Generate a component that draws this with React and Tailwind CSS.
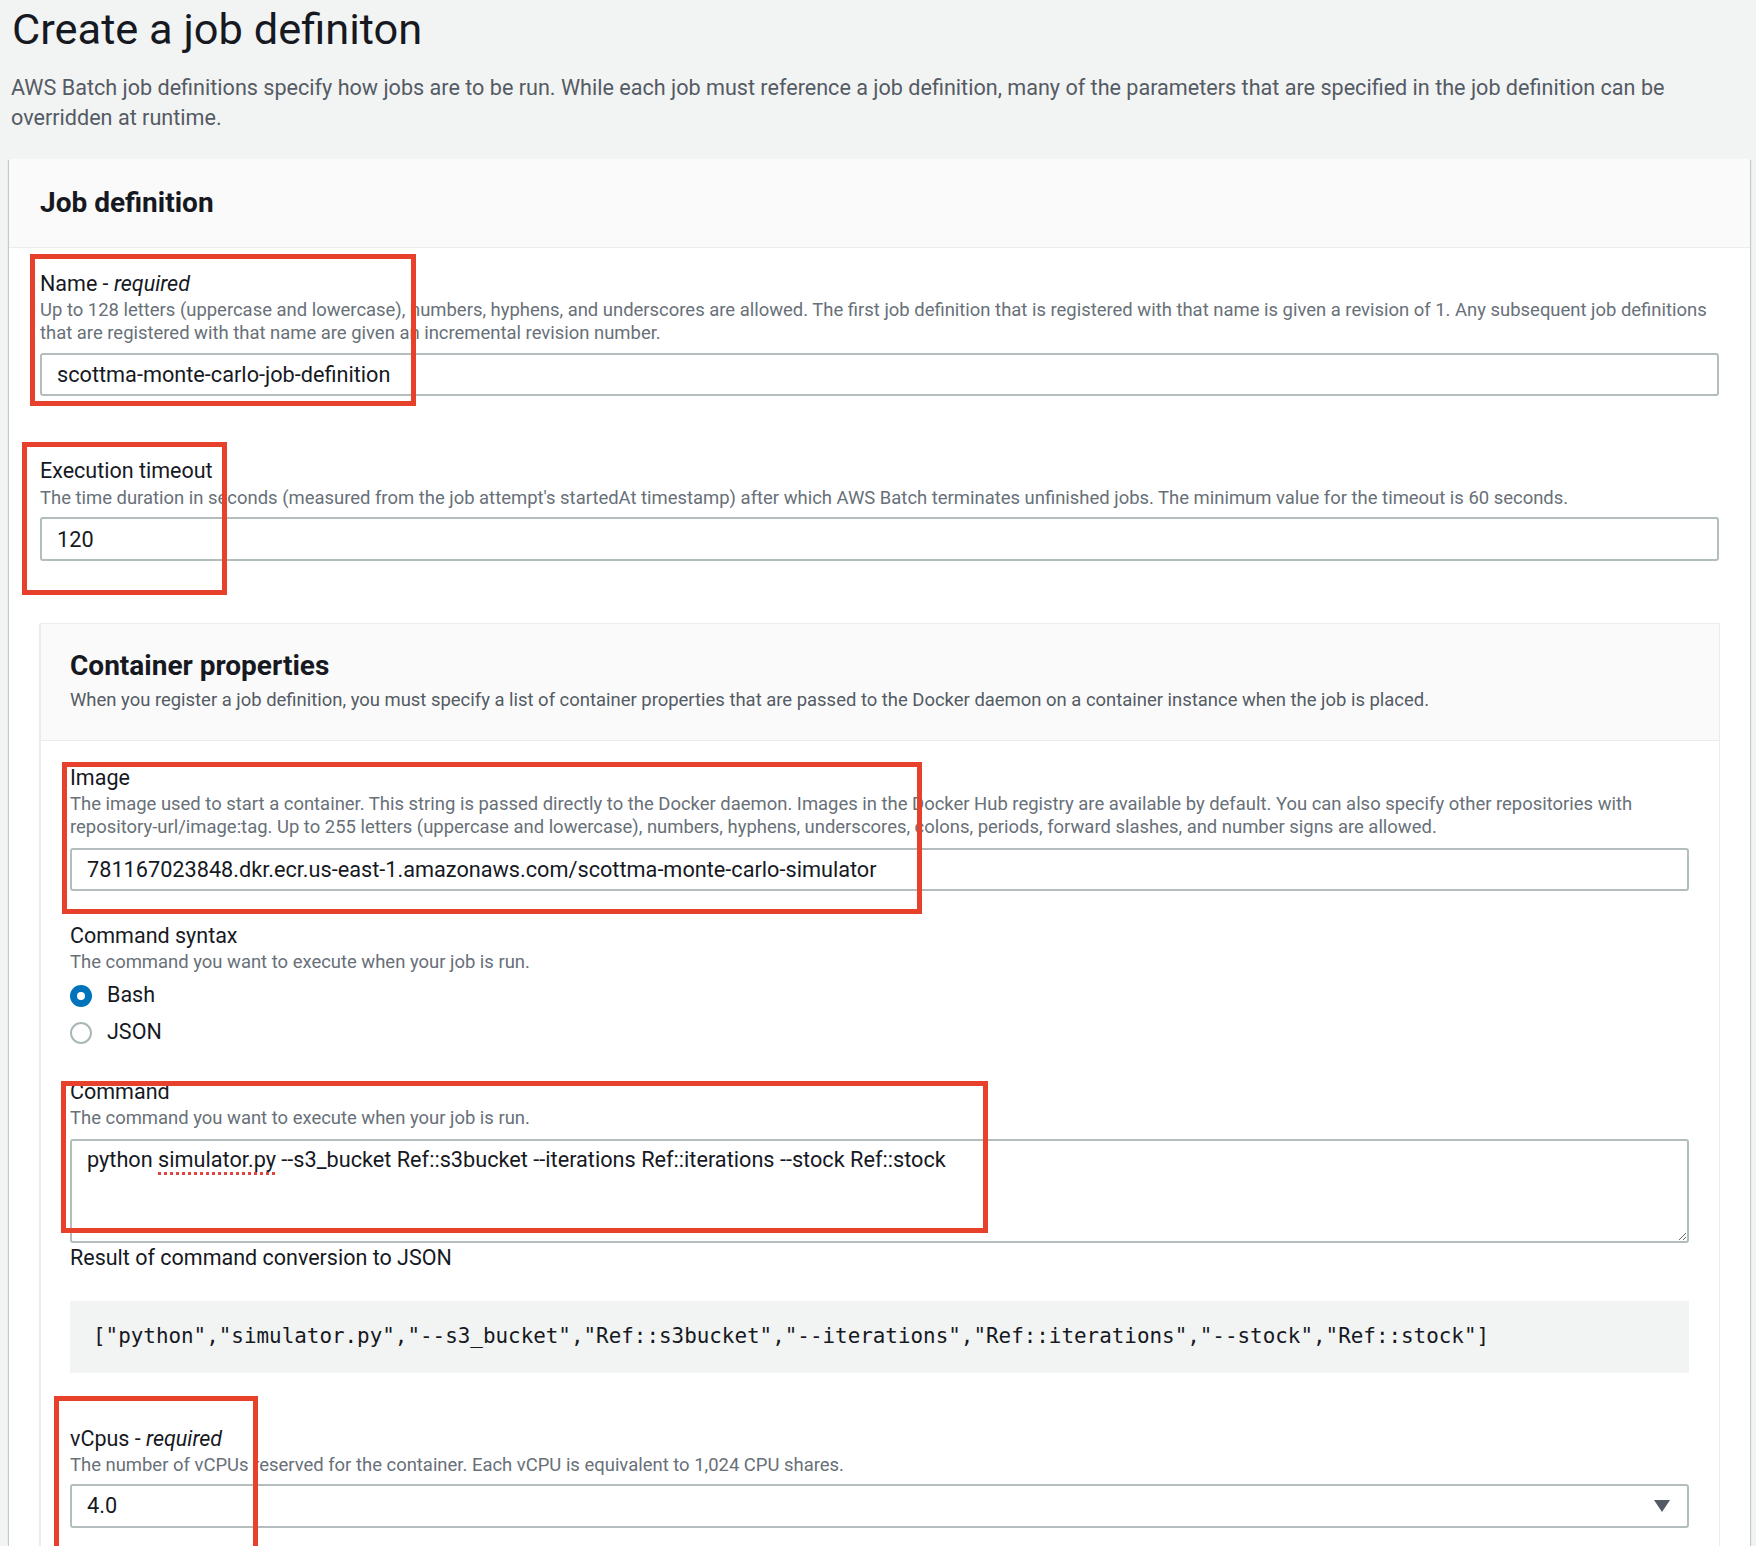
import { useState } from "react";

const label = "text-[21.5px] leading-[28px] text-[#16191f]";
const help = "text-[18.45px] leading-[23px] text-[#687078] whitespace-nowrap";
const field =
  "w-full rounded-[3px] border-2 border-[#b3bdbe] bg-white pl-[15px] text-[21.7px] text-[#16191f] outline-none";

function Radio({ checked, children }) {
  return (
    <div className="flex h-[37px] items-center">
      {checked ? (
        <span className="flex h-[22px] w-[22px] items-center justify-center rounded-full bg-[#0073bb]">
          <span className="h-[8px] w-[8px] rounded-full bg-white" />
        </span>
      ) : (
        <span className="h-[22px] w-[22px] rounded-full border-2 border-[#aab7b8] bg-white" />
      )}
      <span className="ml-[15px] text-[21.5px] text-[#16191f]">{children}</span>
    </div>
  );
}

// red annotation boxes drawn over the form
const marks = [
  "left-[30px] top-[254px] w-[386px] h-[152px]",
  "left-[22px] top-[442px] w-[205px] h-[153px]",
  "left-[62px] top-[762px] w-[860px] h-[152px]",
  "left-[61px] top-[1081px] w-[927px] h-[152px]",
  "left-[54px] top-[1396px] w-[204px] h-[170px]",
];

export default function App() {
  const [syntax, setSyntax] = useState("bash");

  return (
    <div className="relative min-h-[1546px] overflow-hidden bg-[#f2f3f3] pl-[9px] pr-[6px] font-['Roboto',sans-serif] text-[#16191f]">
      <h1 className="ml-[3px] pt-[6px] text-[43.4px] leading-[48px] font-normal">Create a job definiton</h1>
      <p className="mt-[19px] ml-[2px] text-[21.6px] leading-[30px] text-[#545b64] whitespace-nowrap">
        AWS Batch job definitions specify how jobs are to be run. While each job must reference a job definition, many of
        the parameters that are specified in the job definition can be
        <br />
        overridden at runtime.
      </p>

      <div className="mt-[26px] bg-white shadow-[0_1px_1px_0_rgba(0,28,36,0.3),1px_1px_1px_0_rgba(0,28,36,0.15),-1px_1px_1px_0_rgba(0,28,36,0.15)]">
        <div className="border-b border-[#eaeded] bg-[#fafafa] py-[28px] pl-[31px]">
          <h2 className="text-[28px] leading-[32px] font-bold">Job definition</h2>
        </div>

        <div className="px-[31px] pt-[22px] pb-[60px]">
          {/* Name */}
          <div className={label}>
            Name - <i>required</i>
          </div>
          <div className={`${help} mt-[1px]`}>
            Up to 128 letters (uppercase and lowercase), numbers, hyphens, and underscores are allowed. The first job
            definition that is registered with that name is given a revision of 1. Any subsequent job definitions
            <br />
            that are registered with that name are given an incremental revision number.
          </div>
          <input readOnly value="scottma-monte-carlo-job-definition" className={`${field} mt-[8px] h-[43px]`} />

          {/* Execution timeout */}
          <div className={`${label} mt-[61px]`}>Execution timeout</div>
          <div className={`${help} mt-[2px]`}>
            The time duration in seconds (measured from the job attempt's startedAt timestamp) after which AWS Batch
            terminates unfinished jobs. The minimum value for the timeout is 60 seconds.
          </div>
          <input readOnly value="120" className={`${field} mt-[7px] h-[44px]`} />

          {/* Container properties */}
          <div className="mt-[62px] -mr-[1px] border border-[#eaeded] bg-white shadow-[-1px_1px_1px_0_rgba(0,28,36,0.08)]">
            <div className="border-b border-[#eaeded] bg-[#fafafa] pt-[26px] pb-[28px] pl-[29px]">
              <h3 className="text-[28px] leading-[32px] font-bold">Container properties</h3>
              <div className="mt-[7px] text-[18.45px] leading-[23px] text-[#545b64] whitespace-nowrap">
                When you register a job definition, you must specify a list of container properties that are passed to the
                Docker daemon on a container instance when the job is placed.
              </div>
            </div>

            <div className="pl-[29px] pr-[30px] pt-[23px] pb-[120px]">
              <div className={label}>Image</div>
              <div className={`${help} mt-[1px]`}>
                The image used to start a container. This string is passed directly to the Docker daemon. Images in the
                Docker Hub registry are available by default. You can also specify other repositories with
                <br />
                repository-url/image:tag. Up to 255 letters (uppercase and lowercase), numbers, hyphens, underscores,
                colons, periods, forward slashes, and number signs are allowed.
              </div>
              <input
                readOnly
                value="781167023848.dkr.ecr.us-east-1.amazonaws.com/scottma-monte-carlo-simulator"
                className={`${field} mt-[9px] h-[43px]`}
              />

              <div className={`${label} mt-[31px]`}>Command syntax</div>
              <div className={`${help} mt-[1px]`}>The command you want to execute when your job is run.</div>
              <div className="mt-[3px]">
                <div onClick={() => setSyntax("bash")}>
                  <Radio checked={syntax === "bash"}>Bash</Radio>
                </div>
                <div onClick={() => setSyntax("json")}>
                  <Radio checked={syntax === "json"}>JSON</Radio>
                </div>
              </div>

              <div className={`${label} mt-[27px]`}>Command</div>
              <div className={`${help} mt-[1px]`}>The command you want to execute when your job is run.</div>
              <div className="mt-[9px] h-[104px] resize-y overflow-auto rounded-[3px] border-2 border-[#b3bdbe] bg-white pl-[15px] pt-[5px] text-[21.7px] leading-[28px] whitespace-nowrap">
                python{" "}
                <span className="underline decoration-dotted decoration-[#e0443e] decoration-[3px] underline-offset-[5px]">
                  simulator.py
                </span>{" "}
                --s3_bucket Ref::s3bucket --iterations Ref::iterations --stock Ref::stock
              </div>

              <div className={`${label} mt-[1px]`}>Result of command conversion to JSON</div>
              <div className="mt-[29px] flex h-[72px] items-center bg-[#f2f3f3] pl-[23px] font-['DejaVu_Sans_Mono',monospace] text-[20.9px] whitespace-nowrap">
                ["python","simulator.py","--s3_bucket","Ref::s3bucket","--iterations","Ref::iterations","--stock","Ref::stock"]
              </div>

              <div className={`${label} mt-[52px]`}>
                vCpus - <i>required</i>
              </div>
              <div className={`${help} mt-[1px]`}>
                The number of vCPUs reserved for the container. Each vCPU is equivalent to 1,024 CPU shares.
              </div>
              <div className="mt-[7px] flex h-[44px] items-center justify-between rounded-[3px] border-2 border-[#b3bdbe] bg-white pl-[15px] pr-[17px] text-[21.7px]">
                <span>4.0</span>
                <svg width="16" height="12" viewBox="0 0 16 12">
                  <polygon points="0,0 16,0 8,12" fill="#545b64" />
                </svg>
              </div>
            </div>
          </div>
        </div>
      </div>

      {marks.map((m) => (
        <div key={m} className={`pointer-events-none absolute border-[5px] border-[#e8412b] ${m}`} />
      ))}
    </div>
  );
}
